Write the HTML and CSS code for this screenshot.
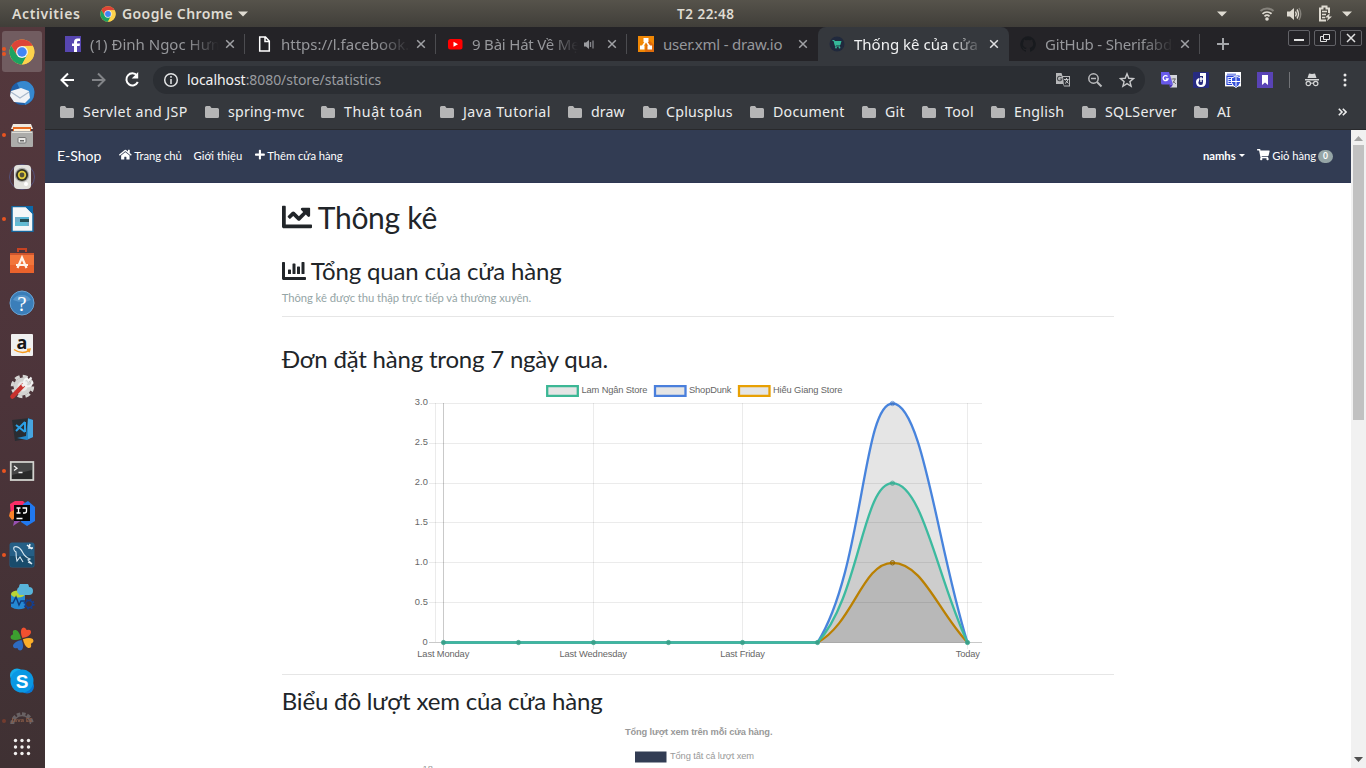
FILE: index.html
```html
<!DOCTYPE html>
<html lang="vi">
<head>
<meta charset="utf-8">
<title>Thống kê của cửa hàng</title>
<link rel="stylesheet" href="styles.css">
</head>
<body>
<svg class="defs" width="0" height="0">
  <defs>
    <symbol id="chrome" viewBox="0 0 48 48">
      <circle cx="24" cy="24" r="23" fill="#fbc943"/>
      <path d="M4 12.6A23 23 0 0 1 44 12.6L24 13 14.5 29.5z" fill="#dd4437"/>
      <path d="M4 12.6A23 23 0 0 0 24 47L33.5 29.5H14.4z" fill="#1da261"/>
      <path d="M24 13H44A23 23 0 0 1 24 47L33.5 29.5z" fill="#fdd24c"/>
      <circle cx="24" cy="24" r="11" fill="#f4f4f4"/><circle cx="24" cy="24" r="8.8" fill="#4285f4"/>
    </symbol>
    <symbol id="folder" viewBox="0 0 14 12"><path d="M1.5 0H5l1.5 2h6A1.5 1.5 0 0 1 14 3.500v7A1.500 1.500 0 0 1 12.500 12h-11A1.500 1.500 0 0 1 0 10.500v-9A1.500 1.500 0 0 1 1.500 0z" fill="#b5b5b6"/></symbol>
    <symbol id="close" viewBox="0 0 10 10"><path d="M1.200 1.200l7.600 7.600M8.800 1.200L1.200 8.800" fill="none" stroke="currentColor" stroke-width="1.500"/></symbol>
    <symbol id="caret" viewBox="0 0 10 6"><path d="M0 .5h10L5 5.500z" fill="currentColor"/></symbol>
  </defs>
</svg>

<header class="topbar">
  <span class="activities">Activities</span>
  <svg class="app-icon" width="16" height="16"><use href="#chrome"/></svg>
  <span class="app-name">Google Chrome</span>
  <svg class="app-caret" width="10" height="6"><use href="#caret"/></svg>
  <span class="clock">T2 22:48</span>
  <div class="tray">
    <svg width="10" height="6"><use href="#caret"/></svg>
    <svg class="wifi" width="16" height="15" viewBox="0 0 16 15" fill="none"><path d="M1.500 5a9.500 9.500 0 0 1 13 0" stroke="#85827b" stroke-width="2"/><path d="M3.500 7.800a6.500 6.500 0 0 1 9 0M5.500 10.300a3.700 3.700 0 0 1 5 0" stroke="#dfdbd2" stroke-width="1.700"/><circle cx="8" cy="13" r="1.800" fill="#dfdbd2"/></svg>
    <svg class="volume" width="16" height="14" viewBox="0 0 16 14" fill="none"><path d="M1 4.500h3l4-3.500v12L4 9.500H1z" fill="#dfdbd2"/><path d="M9.500 4.500q1.600 2.500 0 5M11 2.500q3 4.500 0 9" stroke="#dfdbd2" stroke-width="1.400"/><path d="M13 1q3.500 6 0 12" stroke="#85827b" stroke-width="1.400"/></svg>
    <svg class="battery" width="15" height="17" viewBox="0 0 15 17" fill="none"><path d="M11 8V3.500H8.500V1.500h-4v2H2v12h6" stroke="#dfdbd2" stroke-width="2"/><path d="M4 6.500h5M4 9.500h4M4 12.500h3" stroke="#dfdbd2" stroke-width="1.500"/><path d="M12 8l-5 4.500h3L9 16l5-4.500h-3z" fill="#dfdbd2"/></svg>
    <svg width="10" height="6"><use href="#caret"/></svg>
  </div>
</header>

<div class="desktop">
  <nav class="dock">
    <div class="dock-item active run run2"><svg width="26" height="26"><use href="#chrome"/></svg></div>
    <div class="dock-item"><svg viewBox="0 0 26 26"><circle cx="13.500" cy="13" r="12" fill="#1f5fa8"/><path d="M8 3Q20-3 25 9q2 12-9 16l-3-11z" fill="#3688cf"/><path d="M2 11l10-3 8 3 1 7-5 5-11-1-4-6z" fill="#f1f3f6"/><path d="M2 12l9 6 9-6" fill="none" stroke="#aab9cb" stroke-width="1.200"/></svg></div>
    <div class="dock-item run"><svg viewBox="0 0 26 26"><path d="M4 2h18l2 5H2z" fill="#eee9e0"/><path d="M4 5h18v5H4z" fill="#e86b21"/><path d="M5 7h16v2H5z" fill="#fff0d8"/><rect x="2" y="9" width="22" height="16" rx="1" fill="#acacaa"/><path d="M3 10h20v1H3z" fill="#deded9"/><rect x="9" y="15.500" width="8" height="5.500" rx="1" fill="#e8e8e6" stroke="#777"/><path d="M11 18h4v1.500h-4z" fill="#666"/></svg></div>
    <div class="dock-item"><svg viewBox="0 0 26 26"><circle cx="13" cy="13" r="12.500" fill="none" stroke="#54517a" stroke-width="1"/><rect x="5" y="1" width="17" height="24" rx="4" fill="#e2e2dd"/><circle cx="13" cy="11" r="7.200" fill="#aaa"/><circle cx="13" cy="11" r="6" fill="#323323"/><circle cx="13" cy="11" r="4.200" fill="#e2cc3b"/><circle cx="13" cy="11" r="2.400" fill="#55533a"/><circle cx="17" cy="20" r="2" fill="#fff"/></svg></div>
    <div class="dock-item run"><svg viewBox="0 0 26 26"><path d="M3 .5h14l7 7v18H3z" fill="#f5f7f8" stroke="#15659c" stroke-width="1.500"/><path d="M16 0h8v8z" fill="#0c69a9"/><path d="M6 11h14v9H6z" fill="#70aeca"/><path d="M11 11h9v5h-9z" fill="#264e55"/><path d="M11 11h9v2h-9z" fill="#58b5d5"/><path d="M6 16h12v4H6z" fill="#62bcd4"/></svg></div>
    <div class="dock-item"><svg viewBox="0 0 26 26"><path d="M9 4V1h8v3" fill="none" stroke="#c74323" stroke-width="2"/><path d="M1 5h24v20H1z" fill="#f2753b"/><path d="M1 17h24v8H1z" fill="#e9622c"/><path d="M1 5h24v2H1z" fill="#cf552e"/><path d="M8.500 20L13 9.500 17.500 20M7 17h12" fill="none" stroke="#fff4ea" stroke-width="2.200"/></svg></div>
    <div class="dock-item"><svg viewBox="0 0 26 26"><circle cx="13" cy="13" r="12" fill="#3b7eb9" stroke="#6aa3d3"/><path d="M4 10a10 9 0 0 1 18 0q-8 4-18 0z" fill="#5896cb"/><text x="13" y="20.500" text-anchor="middle" class="help-mark">?</text></svg></div>
    <div class="dock-item"><svg viewBox="0 0 26 26"><rect x="2" y="2" width="22" height="22" rx="1" fill="#f0f0f0"/><text x="13" y="16.500" text-anchor="middle" class="amazon-mark">a</text><path d="M5 17.500q8 5.500 15 1M18 17.500l3-.3-1 3" fill="none" stroke="#f49a20" stroke-width="1.500"/></svg></div>
    <div class="dock-item"><svg viewBox="0 0 26 26"><circle cx="13.500" cy="12.500" r="10.200" fill="none" stroke="#d5d5d3" stroke-width="3" stroke-dasharray="4.900 3.100"/><circle cx="13.500" cy="12.500" r="9" fill="#d3d3d1"/><circle cx="13.500" cy="12.500" r="5" fill="#e9e9e7"/><path d="M3.500 22.500L14 11.500" stroke="#c8322e" stroke-width="4.500" stroke-linecap="round"/><path d="M13 12l5-4" stroke="#eee" stroke-width="3"/><path d="M22.500 3.500l-3 3-1.500-2a4 4 0 1 0 5 3" fill="none" stroke="#f3f3f3" stroke-width="2"/></svg></div>
    <div class="dock-item"><svg viewBox="0 0 26 26"><path d="M3 4l18-2 2 20-17 3z" fill="#292d32"/><path d="M19 2l5 2v17l-6 3-10-2 9-2z" fill="#2489ca"/><path d="M19 3l5 1v17l-5 2z" fill="#47a5df"/><path d="M7 9l9 7M16 6L7 15M16 6v10" fill="none" stroke="#2ba0e6" stroke-width="2"/></svg></div>
    <div class="dock-item run"><svg viewBox="0 0 26 26"><rect x="1.800" y="4" width="22.500" height="18" fill="#292a2a" stroke="#d1d2ce" stroke-width="1.800"/><path d="M3 5h20v7L3 17z" fill="#454646"/><path d="M5 8l3 2.200-3 2.300M9.500 14.500h4" fill="none" stroke="#eee" stroke-width="1.300"/></svg></div>
    <div class="dock-item"><svg viewBox="0 0 26 26"><path d="M1 4l5-3h8l5 5-7 9-10 2z" fill="#f92d67"/><path d="M1 12l6-3 2 7-6 4-3-4z" fill="#f9822a"/><path d="M14 4l5-3 7 6v14l-8 5-6-4z" fill="#2179ef"/><path d="M7 13l6 7-9 6z" fill="#9850b2"/><path d="M5 5h16v16H5z" fill="#070708"/><path d="M7.500 8h4M7.500 13h4M9.500 8v5M13.500 8h4v3q0 2-2 2H14M7.500 18.500h6" fill="none" stroke="#fff" stroke-width="1.300"/></svg></div>
    <div class="dock-item run"><svg viewBox="0 0 26 26"><rect x=".5" y=".5" width="25" height="25" rx="2.500" fill="#255f86"/><path d="M1 14h24v9q0 2-2 2H3q-2 0-2-2z" fill="#194c6c"/><path d="M5 5q5-2 9 6 2 4 7 6l-2 1 4 4-4-2M5 5q-1 3 2 5 0 5 1 9l3-4 3 5" fill="none" stroke="#d9e8f1" stroke-width="1.100"/><path d="M18 3l5 4M21 2l-1 4 4 0" stroke="#eef5fa" stroke-width="1.500" fill="none"/></svg></div>
    <div class="dock-item"><svg viewBox="0 0 26 26"><path d="M2 10v13q6 4 14 1V10z" fill="#2589d4"/><ellipse cx="9" cy="10" rx="7" ry="3.500" fill="#bad435"/><path d="M10 10a4 4 0 0 1 0-7 5 5 0 0 1 10 0 4 4 0 0 1 4 4q0 4-4 4h-10z" fill="#58b4da"/><path d="M1 19h3l3-6 3 8 2-4h4" fill="none" stroke="#113c7a" stroke-width="1.400"/><circle cx="20" cy="20" r="3.500" fill="none" stroke="#123f92" stroke-width="1.500"/><circle cx="20" cy="20" r="4.800" fill="none" stroke="#123f92" stroke-width="1.500" stroke-dasharray="1.800 1.970"/></svg></div>
    <div class="dock-item"><svg viewBox="0 0 26 26"><g transform="rotate(-18 13 13)"><path d="M13 12Q8 7 9 3q2-3 5 0 4-3 5 1 0 4-6 8z" fill="#f2502f" transform="rotate(40 13 13)"/><path d="M12 13Q7 18 3 17q-3-2 0-5-3-4 1-5 4 0 8 6z" fill="#3ca02f" transform="rotate(40 13 13)"/><path d="M13 14q5 5 4 9-2 3-5 0-4 3-5-1 0-4 6-8z" fill="#2e6bc0" transform="rotate(40 13 13)"/><path d="M14 13q5-5 9-4 3 2 0 5 3 4-1 5-4 0-8-6z" fill="#fbae29" transform="rotate(40 13 13)"/></g></svg></div>
    <div class="dock-item"><svg viewBox="0 0 26 26"><circle cx="8" cy="7.500" r="7" fill="#14acec"/><circle cx="18" cy="18.500" r="7" fill="#0878d4"/><circle cx="13" cy="13" r="11.500" fill="#0998e4"/><text x="13" y="19.500" text-anchor="middle" class="skype-mark">S</text></svg></div>
    <div class="dock-item partial run"><svg width="26" height="16" viewBox="0 0 26 16"><path d="M3 15a10 10 0 0 1 20 0" fill="none" stroke="#777375" stroke-width="3.500" stroke-dasharray="3.500 1.700"/><path d="M4.500 15a8.500 8.500 0 0 1 17 0" fill="none" stroke="#777375" stroke-width="1.500"/><text x="13" y="12.500" text-anchor="middle" class="java-mark">Java EE</text></svg></div>
    <div class="dock-grid"><svg width="18" height="18" viewBox="0 0 18 18" fill="#f2f1f0"><circle cx="2.500" cy="2.500" r="1.700"/><circle cx="9" cy="2.500" r="1.700"/><circle cx="15.500" cy="2.500" r="1.700"/><circle cx="2.500" cy="9" r="1.700"/><circle cx="9" cy="9" r="1.700"/><circle cx="15.500" cy="9" r="1.700"/><circle cx="2.500" cy="15.500" r="1.700"/><circle cx="9" cy="15.500" r="1.700"/><circle cx="15.500" cy="15.500" r="1.700"/></svg></div>
  </nav>

  <main class="browser">
    <div class="tabs">
      <div class="tab"><svg width="16" height="16" viewBox="0 0 16 16"><path d="M0 0h16v16H0z" fill="#5746b0"/><path d="M9 16v-6H7V7.500h2V6q0-3.500 3.500-3.500H15V5h-1.700Q12 5 12 6.300v1.200h3l-.4 2.500H12v6z" fill="#fff"/></svg><span class="title t1">(1) Đinh Ngọc Hưng</span><svg class="x" width="10" height="10"><use href="#close"/></svg></div>
      <div class="tab"><svg width="16" height="16" viewBox="0 0 16 16"><path d="M3.700 1h5.800l3.800 4v10H3.700zM9 1v4.500h4" fill="none" stroke="#fff" stroke-width="1.500"/></svg><span class="title t2">https://l.facebook.c</span><svg class="x" width="10" height="10"><use href="#close"/></svg></div>
      <div class="tab"><svg width="16" height="16" viewBox="0 0 16 16"><rect x="1" y="3" width="14.500" height="10.500" rx="2.500" fill="#f00"/><path d="M6.500 5.800v5L11 8.300z" fill="#fff"/></svg><span class="title t3">9 Bài Hát Về Mẹ</span><svg class="audio" width="11" height="11" viewBox="0 0 11 11"><path d="M0 3.500h2L5 1v9L2 7.500H0z" fill="#9b9ca0"/><path d="M6.500 3v5M9 1.500v8" stroke="#85868b" stroke-width="1.300"/></svg><svg class="x" width="10" height="10"><use href="#close"/></svg></div>
      <div class="tab"><svg width="16" height="16" viewBox="0 0 16 16"><path d="M0 0h16v16H0z" fill="#f08705"/><path d="M9 2l7 7v7H7z" fill="#df6c0c"/><path d="M8 5l-4 6M8 5l4 6" stroke="#fff" stroke-width="1.600"/><path d="M5.500 2h5v4h-5zM2 9.500h4.500v4H2zM9.500 9.500H14v4H9.500z" fill="#fff"/></svg><span class="title t4">user.xml - draw.io</span><svg class="x" width="10" height="10"><use href="#close"/></svg></div>
      <div class="tab current"><svg width="16" height="16" viewBox="0 0 16 16"><circle cx="8" cy="8" r="7.500" fill="#20293d"/><path d="M3.500 4.500h1.500l1.500 5.500H11" fill="none" stroke="#35b99a" stroke-width="1.100"/><path d="M5 5h7.500l-1.200 4H6z" fill="#35b99a"/><circle cx="7" cy="11.500" r=".9" fill="#35b99a"/><circle cx="10.500" cy="11.500" r=".9" fill="#35b99a"/></svg><span class="title t5">Thống kê của cửa h</span><svg class="x" width="10" height="10"><use href="#close"/></svg></div>
      <div class="tab"><svg width="16" height="16" viewBox="0 0 16 16"><path d="M8 .3a8 8 0 0 0-2.500 15.500c.4.100.500-.2.500-.4v-1.500c-2.200.5-2.700-1-2.700-1-.3-.8-.8-1.100-.8-1.100-.8-.5 0-.5 0-.5.800 0 1.200.8 1.200.8.800 1.200 1.900.9 2.400.7 0-.6.300-.9.500-1.100-1.800-.2-3.600-.9-3.600-4 0-.9.300-1.600.8-2.100 0-.2-.3-1 .1-2.100 0 0 .700-.2 2.200.8a7.500 7.500 0 0 1 4 0c1.500-1 2.200-.8 2.200-.8.400 1.100.1 1.900.1 2.100.5.500.8 1.200.8 2.100 0 3.100-1.900 3.800-3.600 4 .3.300.5.800.5 1.500v2.200c0 .2.100.5.500.4A8 8 0 0 0 8 .3z" fill="#181a1e"/></svg><span class="title t6">GitHub - Sherifabde</span><svg class="x" width="10" height="10"><use href="#close"/></svg></div>
      <svg class="new-tab" width="12" height="12" viewBox="0 0 12 12"><path d="M6 0v12M0 6h12" stroke="#a4a6aa" stroke-width="2"/></svg>
      <div class="window-buttons">
        <svg width="22" height="16" viewBox="0 0 22 16"><rect x=".5" y=".5" width="21" height="15" rx="1.500"/><path class="glyph" d="M6 10h10" stroke-width="2"/></svg>
        <svg width="22" height="16" viewBox="0 0 22 16"><rect x=".5" y=".5" width="21" height="15" rx="1.500"/><path class="glyph" d="M9.500 4.500h6v5h-6zM12.500 9.500v2h-6v-5h3"/></svg>
        <svg width="22" height="16" viewBox="0 0 22 16"><rect x=".5" y=".5" width="21" height="15" rx="1.500"/><path class="glyph" d="M7 4l8 8M15 4l-8 8" stroke-width="1.500"/></svg>
      </div>
    </div>

    <div class="toolbar">
      <svg class="nav-icons" width="80" height="16" viewBox="0 0 80 16" fill="none" stroke-width="2"><path d="M14 8H1.500M8 1.500L1.500 8 8 14.500" stroke="#fff"/><path d="M32 8h12.500M38 1.500L44.500 8 38 14.500" stroke="#828488"/><path d="M77 3.500A6 6 0 1 0 77.800 10" stroke="#fff"/><path d="M78.200 0v6.500h-6.500z" fill="#fff"/></svg>
      <div class="omnibox">
        <svg width="16" height="16" viewBox="0 0 16 16" fill="none" stroke="#e4e5e6" stroke-width="1.500"><circle cx="8" cy="8" r="6.300"/><path d="M8 7v5M8 4v1.700"/></svg>
        <span class="url"><b>localhost</b>:8080/store/statistics</span>
        <div class="omni-actions">
          <svg width="16" height="16" viewBox="0 0 16 16"><path d="M1 1h5.500l1 3H15v10.500H9L8 12H1z" fill="#b7b8ba"/><path d="M8 5h6v8.500H9z" fill="#303338"/><path d="M6.500 5A2.300 2.300 0 1 0 7 7H4.800" fill="none" stroke="#44474b" stroke-width="1.100"/><path d="M9 7.500h4.500M11.500 6v1.500M13 7.500q-1 3-3 4M10.500 8.500l3 3" fill="none" stroke="#c5c6c8"/></svg>
          <svg width="16" height="16" viewBox="0 0 16 16" fill="none" stroke="#babbbd" stroke-width="1.500"><circle cx="6.500" cy="6.500" r="4.700"/><path d="M10 10l4.500 4.500" stroke-width="2"/><path d="M4 6.500h5"/></svg>
          <svg width="16" height="16" viewBox="0 0 16 16"><path d="M8 1.800l1.800 4.500 4.800.3-3.700 3 1.200 4.700L8 11.700l-4.100 2.600 1.200-4.700-3.700-3 4.800-.3z" fill="none" stroke="#c7c8ca" stroke-width="1.400"/></svg>
        </div>
      </div>
      <div class="extensions">
        <svg width="16" height="16" viewBox="0 0 16 16"><path d="M8 3h8v12.500H9z" fill="#d4d5dc"/><path d="M0 0h8l4 12.500H1.500Q0 12.500 0 11z" fill="#6859ea"/><path d="M8 12.500h4L9.500 16z" fill="#4a32ba"/><path d="M6.500 4.500A2.500 2.500 0 1 0 7 7H4.800" fill="none" stroke="#fff" stroke-width="1.300"/><path d="M10.500 7H15M13 6v1M14 7q-1 3-2 4M12 9l3 3" fill="none" stroke="#777"/></svg>
        <svg width="16" height="16" viewBox="0 0 16 16"><rect width="16" height="16" rx="1" fill="#272b80"/><path d="M7 1h6v9q0 5-5 5-5 0-5-5 0-3 3-4v3q-1 1-.5 2.500Q6 13 8 13q2 0 2-2.500V4H7z" fill="#fff"/><path d="M8 5v5M6.500 7H10" stroke="#fff" stroke-width="1.300"/></svg>
        <svg width="16" height="16" viewBox="0 0 16 16"><rect x=".7" y=".7" width="14.600" height="13" fill="#2642d6" stroke="#fff" stroke-width="1.400"/><path d="M1 1h14v2.500H1z" fill="#fff"/><path d="M2 2.200h9" stroke="#2642d6" stroke-width=".8"/><path d="M2.500 5h10v7h-10z" fill="#dfe4ff"/><path d="M3.500 6.500h3M3.500 8.500h3M3.500 10.500h3" stroke="#2642d6"/><path d="M11 4l4.500 2v4.500q-1 3.500-4.500 5-3.500-1.500-4.500-5V6z" fill="#3450da" stroke="#fff"/><path d="M11 5v9M7 9.500h8" stroke="#fff"/></svg>
        <svg width="16" height="16" viewBox="0 0 16 16"><path d="M0 0h16v16H0z" fill="#5943b6"/><path d="M5 3h6v10l-3-2.500L5 13z" fill="#fff"/></svg>
        <i></i>
        <svg class="incognito" width="14" height="15" viewBox="0 0 14 15"><path d="M4 1.500l3 .5 3-.5L11.500 6h-9zM0 7h14v1.500H0z" fill="#d4d5d6"/><path d="M5.500 11.500q1.500-1 3 0" stroke="#d4d5d6" fill="none"/><circle cx="3.300" cy="11.500" r="2.200" fill="none" stroke="#d4d5d6" stroke-width="1.200"/><circle cx="10.700" cy="11.500" r="2.200" fill="none" stroke="#d4d5d6" stroke-width="1.200"/></svg>
        <svg class="menu" width="4" height="14" viewBox="0 0 4 14" fill="#e8e8e9"><circle cx="2" cy="2" r="1.500"/><circle cx="2" cy="7" r="1.500"/><circle cx="2" cy="12" r="1.500"/></svg>
      </div>
    </div>

    <div class="bookmarks">
      <div><svg width="14" height="12"><use href="#folder"/></svg><span>Servlet and JSP</span></div>
      <div><svg width="14" height="12"><use href="#folder"/></svg><span>spring-mvc</span></div>
      <div><svg width="14" height="12"><use href="#folder"/></svg><span>Thuật toán</span></div>
      <div><svg width="14" height="12"><use href="#folder"/></svg><span>Java Tutorial</span></div>
      <div><svg width="14" height="12"><use href="#folder"/></svg><span>draw</span></div>
      <div><svg width="14" height="12"><use href="#folder"/></svg><span>Cplusplus</span></div>
      <div><svg width="14" height="12"><use href="#folder"/></svg><span>Document</span></div>
      <div><svg width="14" height="12"><use href="#folder"/></svg><span>Git</span></div>
      <div><svg width="14" height="12"><use href="#folder"/></svg><span>Tool</span></div>
      <div><svg width="14" height="12"><use href="#folder"/></svg><span>English</span></div>
      <div><svg width="14" height="12"><use href="#folder"/></svg><span>SQLServer</span></div>
      <div><svg width="14" height="12"><use href="#folder"/></svg><span>AI</span></div>
      <svg class="more" width="9" height="8" viewBox="0 0 9 8" fill="none" stroke="#eceded" stroke-width="1.600"><path d="M.8.800L4 4 .8 7.200M4.800.8L8 4 4.800 7.200"/></svg>
    </div>

    <div class="viewport">
      <div class="page">
        <nav class="navbar">
          <a class="brand">E-Shop</a>
          <a class="n1"><svg width="12.700" height="11.250" viewBox="0 0 576 512"><path d="M280.370 148.260L96 300.110V464a16 16 0 0 0 16 16l112.060-.29a16 16 0 0 0 15.920-16V368a16 16 0 0 1 16-16h64a16 16 0 0 1 16 16v95.640a16 16 0 0 0 16 16.050L464 480a16 16 0 0 0 16-16V300L295.670 148.260a12.190 12.190 0 0 0-15.300 0zM571.600 251.470L488 182.560V44.050a12 12 0 0 0-12-12h-56a12 12 0 0 0-12 12v72.610L318.470 43a48 48 0 0 0-61 0L4.340 251.470a12 12 0 0 0-1.600 16.900l25.500 31A12 12 0 0 0 45.150 301l235.220-193.740a12.190 12.190 0 0 1 15.300 0L530.900 301a12 12 0 0 0 16.900-1.600l25.500-31a12 12 0 0 0-1.700-16.930z"/></svg><span>Trang chủ</span></a>
          <a class="n2"><span>Giới thiệu</span></a>
          <a class="n3"><svg width="9.850" height="11.250" viewBox="0 0 448 512"><path d="M416 208H272V64c0-17.670-14.330-32-32-32h-32c-17.670 0-32 14.330-32 32v144H32c-17.670 0-32 14.330-32 32v32c0 17.670 14.330 32 32 32h144v144c0 17.670 14.330 32 32 32h32c17.670 0 32-14.330 32-32V304h144c17.670 0 32-14.330 32-32v-32c0-17.670-14.330-32-32-32z"/></svg><span>Thêm cửa hàng</span></a>
          <div class="account">
            <a class="user">namhs<i></i></a>
            <a class="cart"><svg width="12.700" height="11.250" viewBox="0 0 576 512"><path d="M528.120 301.319l47.273-208C578.806 78.301 567.391 64 551.990 64H159.208l-9.166-44.810C147.758 8.021 137.930 0 126.529 0H24C10.745 0 0 10.745 0 24v16c0 13.255 10.745 24 24 24h69.883l70.248 343.435C147.325 417.100 136 435.222 136 456c0 30.928 25.072 56 56 56s56-25.072 56-56c0-15.674-6.447-29.835-16.824-40h209.647C430.447 426.165 424 440.326 424 456c0 30.928 25.072 56 56 56s56-25.072 56-56c0-22.172-12.888-41.332-31.579-50.405l5.517-24.276c3.413-15.018-8.002-29.319-23.403-29.319H218.117l-6.545-32h293.145c11.206 0 20.920-7.754 23.403-18.681z"/></svg><span>Giỏ hàng</span><b>0</b></a>
          </div>
        </nav>

        <div class="container">
          <h1><svg width="30" height="30" viewBox="0 0 512 512"><path d="M496 384H64V80c0-8.840-7.160-16-16-16H16C7.160 64 0 71.160 0 80v336c0 17.670 14.330 32 32 32h464c8.840 0 16-7.160 16-16v-32c0-8.840-7.160-16-16-16zM464 96H345.940c-21.380 0-32.090 25.850-16.970 40.970l32.400 32.400L288 242.750l-73.370-73.370c-12.500-12.500-32.760-12.500-45.250 0l-68.690 68.690c-6.250 6.250-6.250 16.380 0 22.630l22.620 22.620c6.250 6.250 16.380 6.250 22.630 0L192 237.250l73.370 73.370c12.500 12.500 32.760 12.500 45.250 0l96-96 32.400 32.400c15.120 15.120 40.970 4.410 40.970-16.970V112c.01-8.840-7.150-16-15.990-16z"/></svg><span>Thông kê</span></h1>
          <h2 class="overview"><svg width="24" height="24" viewBox="0 0 512 512"><path d="M332.800 320h38.400c6.400 0 12.800-6.400 12.800-12.800V172.800c0-6.400-6.400-12.800-12.800-12.800h-38.400c-6.400 0-12.800 6.400-12.800 12.800v134.400c0 6.400 6.400 12.800 12.800 12.800zm96 0h38.400c6.400 0 12.800-6.400 12.800-12.800V76.800c0-6.400-6.400-12.800-12.800-12.800h-38.400c-6.400 0-12.800 6.400-12.800 12.800v230.400c0 6.400 6.400 12.800 12.800 12.800zm-288 0h38.400c6.400 0 12.800-6.400 12.800-12.800v-70.400c0-6.400-6.400-12.800-12.800-12.800h-38.400c-6.400 0-12.800 6.400-12.800 12.800v70.400c0 6.400 6.400 12.800 12.800 12.800zm96 0h38.400c6.400 0 12.800-6.400 12.800-12.800V108.800c0-6.400-6.400-12.800-12.800-12.800h-38.400c-6.400 0-12.800 6.400-12.800 12.800v198.400c0 6.400 6.400 12.800 12.800 12.800zM496 384H64V80c0-8.840-7.160-16-16-16H16C7.160 64 0 71.160 0 80v336c0 17.670 14.330 32 32 32h464c8.840 0 16-7.160 16-16v-32c0-8.840-7.160-16-16-16z"/></svg><span>Tổng quan của cửa hàng</span></h2>
          <p class="muted">Thông kê được thu thập trực tiếp và thường xuyên.</p>
          <h2 class="orders">Đơn đặt hàng trong 7 ngày qua.</h2>
          <svg class="line-chart" width="600" height="290" viewBox="400 380 600 290">
            <g stroke="#000" stroke-opacity=".1" fill="none">
              <path d="M429 403.500H982M429 443.500H982M429 483.500H982M429 522.500H982M429 562.500H982M429 602.500H982M435.500 403V642M593.500 403V649M742.500 403V649M967.500 403V649" stroke-opacity=".08"/>
              <path d="M429 642.500H982M443.500 403V650" stroke-opacity=".21"/>
            </g>
            <g stroke-width="2.300" stroke-linejoin="round" fill="rgba(0,0,0,.1)">
              <path stroke="#e8a003" d="M443.500 642.500H817.500C853.100 623.600 862.500 562.800 892.500 562.800S937.500 610.600 967.500 642.500"/>
              <circle cx="892.500" cy="562.800" r="2.200" stroke="#b98209" stroke-width="1"/>
              <path stroke="#3e7ddb" stroke-opacity=".95" d="M443.500 642.500H817.500C863.700 568.900 862.500 403.500 892.500 403.500S937.500 546.900 967.500 642.500"/>
              <circle cx="892.500" cy="403.500" r="2.200" stroke="#3e7ddb" stroke-width="1" stroke-opacity=".6"/>
              <path stroke="#3cba9f" d="M443.500 642.500H817.500C859.600 597.800 862.500 483.200 892.500 483.200S937.500 578.800 967.500 642.500"/>
            </g>
            <g fill="#3a9f8a" stroke="#3aa890" stroke-opacity=".6"><circle cx="443.500" cy="642.500" r="2.200"/><circle cx="518.500" cy="642.500" r="2.200"/><circle cx="593.500" cy="642.500" r="2.200"/><circle cx="668.500" cy="642.500" r="2.200"/><circle cx="742.500" cy="642.500" r="2.200"/><circle cx="817.500" cy="642.500" r="2.200"/><circle cx="892.500" cy="483.200" r="2.200" fill-opacity=".4"/><circle cx="967.500" cy="642.500" r="2.200"/></g>
            <g fill="#e5e5e5" stroke-width="2.300"><path stroke="#3cb795" d="M547.200 386.200h30.600v9.600h-30.600z"/><path stroke="#4a7fdc" d="M655 386.200h30.500v9.600H655z"/><path stroke="#e8a003" d="M739 386.200h30.500v9.600H739z"/></g>
            <g class="chart-text">
              <text x="581.500" y="393" textLength="66">Lam Ngân Store</text><text x="689" y="393" textLength="42.500">ShopDunk</text><text x="773" y="393" textLength="69.500">Hiếu Giang Store</text>
              <text x="414.800" y="405.300" textLength="13">3.0</text><text x="414.800" y="445.300" textLength="13">2.5</text><text x="414.800" y="485.300" textLength="13">2.0</text><text x="414.800" y="525.300" textLength="13">1.5</text><text x="414.800" y="565" textLength="13">1.0</text><text x="414.800" y="605" textLength="13">0.5</text><text x="422.500" y="645.300">0</text>
              <text x="417.300" y="657" textLength="52">Last Monday</text><text x="559.500" y="657" textLength="67.500">Last Wednesday</text><text x="720.300" y="657" textLength="44.500">Last Friday</text><text x="955.800" y="657" textLength="24">Today</text>
            </g>
          </svg>
          <hr>
          <h2 class="views">Biểu đô lượt xem của cửa hàng</h2>
          <svg class="bar-chart" width="600" height="50" viewBox="400 718 600 50">
            <rect x="635" y="751.500" width="31.500" height="11" fill="#323c53"/>
            <g class="chart-text faded"><text x="625" y="735" textLength="147.500" font-weight="bold">Tổng lượt xem trên mỗi cửa hàng.</text><text x="670" y="759" textLength="84">Tổng tất cả lượt xem</text><text x="422.500" y="771.500">18</text></g>
          </svg>
        </div>
      </div>
      <div class="scrollbar"><svg width="9" height="5" viewBox="0 0 9 5"><path d="M0 5l4.500-5L9 5z" fill="#a3a3a3"/></svg><div></div><svg class="down" width="9" height="5" viewBox="0 0 9 5"><path d="M0 0l4.500 5L9 0z" fill="#505050"/></svg></div>
    </div>
  </main>
</div>
</body>
</html>
```
FILE: styles.css
```css
* { box-sizing: border-box; }
body { margin: 0; width: 1366px; height: 768px; overflow: hidden; font-family: "Noto Sans", sans-serif; background: #fff; }
svg { display: block; flex: none; }
.defs { position: absolute; }

.topbar { height: 27px; display: flex; align-items: center; background: linear-gradient(#56534b, #403e39); color: #dfdbd2; font-size: 14px; font-weight: 600; }
.activities { width: 88px; padding-left: 12px; letter-spacing: .6px; }
.app-icon { margin-left: 12px; }
.app-name { margin-left: 6px; width: 111px; white-space: nowrap; letter-spacing: .4px; }
.app-caret { margin-left: 5px; }
.clock { margin-left: 429px; font-size: 13.5px; letter-spacing: .5px; }
.tray { display: flex; align-items: center; margin-left: auto; margin-right: 14px; }
.wifi { margin-left: 32px; }
.volume { margin-left: 11px; }
.battery { margin-left: 16px; }
.battery + svg { margin-left: 9px; }

.desktop { display: flex; height: 741px; }
.dock { width: 45px; background: linear-gradient(#54383d, #4c343a 50%, #3f3133); padding: 4px 0 0; overflow: hidden; }
.dock-item { height: 42px; width: 40px; margin: 0 0 0 2px; display: flex; align-items: center; justify-content: center; position: relative; }
.dock-item svg { width: 26px; height: 26px; }
.dock-item.active { height: 41px; background: #715c60; border-radius: 3px; }
.dock-item.run::before { content: ""; position: absolute; left: 0; top: 19px; width: 4px; height: 4px; border-radius: 50%; background: #e95420; }
.dock-item.run2::before { top: 16px; box-shadow: 0 5px #e95420; }
.dock-item.partial { height: 26px; align-items: flex-start; padding-top: 7px; opacity: .75; }
.dock-item.partial svg { height: 16px; }
.dock-item.partial::before { opacity: .4; top: 17px; }
.dock-grid { display: flex; justify-content: center; margin-top: 10px; padding-right: 1px; }
.help-mark { font: 21px "Liberation Serif", serif; fill: #fff; }
.amazon-mark { font: bold 18px "Noto Sans", sans-serif; fill: #171717; }
.skype-mark { font: bold 19px "Liberation Sans", sans-serif; fill: #fff; }
.java-mark { font: bold 6px "Noto Sans", sans-serif; fill: #a36b4e; }

.browser { width: 1321px; background: #35383d; }
.tabs { height: 34px; background: #242327; display: flex; padding-left: 9px; }
.tab { width: 191px; display: flex; align-items: center; padding-left: 11px; position: relative; color: #96979b; }
.tab:not(.current)::after { content: ""; position: absolute; right: 0; top: 7px; width: 1px; height: 20px; background: #4c4c50; }
.tab:nth-child(4)::after { display: none; }
.tab.current { background: #35383d; color: #f1f2f3; border-radius: 8px 8px 0 0; }
.title { margin-left: 9px; width: 129px; height: 24px; line-height: 24px; font-size: 15px; letter-spacing: -.2px; white-space: nowrap; overflow: hidden; -webkit-mask-image: linear-gradient(90deg, #000 75%, transparent); mask-image: linear-gradient(90deg, #000 75%, transparent); }
.t1 { letter-spacing: 0; }
.t2 { letter-spacing: 0; }
.t3 { width: 106px; }
.t4 { -webkit-mask: none; mask: none; }
.t5 { letter-spacing: 0; }
.audio { margin-left: 6px; margin-right: 5px; }
.x { margin-left: 6px; color: #a0a1a5; }
.audio + .x { margin-left: 7px; }
.current .x { color: #e0e0e2; }
.new-tab { margin: 11px 0 0 17px; }
.window-buttons { margin: 3px 4px 0 auto; display: flex; gap: 4px; }
.window-buttons svg { fill: none; }
.window-buttons rect { stroke: #626267; }
.window-buttons .glyph { stroke: #e2e2e2; }

.toolbar { height: 37px; display: flex; align-items: center; }
.nav-icons { margin-left: 15px; }
.omnibox { margin-left: 13px; width: 992px; height: 28px; border-radius: 14px; background: #2b2e33; display: flex; align-items: center; padding-left: 10px; color: #9a9ca0; font-size: 14px; }
.url { margin-left: 8px; letter-spacing: -.06px; }
.url b { font-weight: 400; color: #f2f2f2; }
.omni-actions { margin-left: auto; margin-right: 10px; display: flex; gap: 16px; }
.extensions { display: flex; align-items: center; margin-left: 16px; }
.extensions svg { margin-right: 16px; }
.extensions i { width: 1px; height: 16px; background: #717377; margin-right: 15px; }
.extensions .incognito { margin-right: 24px; }
.extensions .menu { margin-right: 0; }

.bookmarks { height: 32px; display: flex; align-items: center; padding: 0 0 4px 15px; font-size: 14.2px; color: #eceded; border-bottom: 1px solid #28292c; }
.bookmarks div { display: flex; align-items: center; width: 145px; white-space: nowrap; letter-spacing: .4px; }
.bookmarks div:nth-child(2) { width: 116px; letter-spacing: .2px; }
.bookmarks div:nth-child(3) { width: 119px; letter-spacing: .6px; }
.bookmarks div:nth-child(4) { width: 128px; letter-spacing: .5px; }
.bookmarks div:nth-child(5) { width: 75px; letter-spacing: .1px; }
.bookmarks div:nth-child(6) { width: 107px; letter-spacing: .22px; }
.bookmarks div:nth-child(7) { width: 112px; letter-spacing: .25px; }
.bookmarks div:nth-child(8) { width: 60px; letter-spacing: .2px; }
.bookmarks div:nth-child(9) { width: 69px; letter-spacing: .3px; }
.bookmarks div:nth-child(10) { width: 91px; letter-spacing: .3px; }
.bookmarks div:nth-child(11) { width: 112px; letter-spacing: .33px; }
.bookmarks div:nth-child(12) { width: 60px; letter-spacing: 0; }
.bookmarks span { margin-left: 9px; }
.more { margin-left: auto; margin-right: 19px; }

.viewport { display: flex; height: 638px; }
.page { width: 1306px; background: #fff; overflow: hidden; font-family: Lato, sans-serif; color: #212529; }
.navbar { height: 53px; background: #323c53; border-bottom: 1px solid #2e3753; display: flex; align-items: center; padding: 0 18px 2px 12px; color: #fff; font-size: 11.25px; letter-spacing: -.05px; }
.navbar a { display: flex; align-items: center; white-space: nowrap; }
.navbar svg { fill: #fff; margin-right: 2.500px; }
.navbar .brand { font-size: 14.06px; width: 62px; padding-top: 1px; }
.navbar .n1 { width: 74.500px; }
.navbar .n2 { width: 61.500px; letter-spacing: .03px; }
.account { margin-left: auto; display: flex; gap: 12.500px; }
.user { font-weight: 700; }
.user i { border: 3px solid transparent; border-top-color: #fff; border-bottom: 0; margin-left: 3px; }
.cart b { background: #95a5a6; border-radius: 8px; width: 15px; height: 13px; line-height: 13px; font-size: 8.500px; text-align: center; margin-left: 2px; margin-top: 2px; }

.container { width: 855px; margin: 0 auto; padding: 0 11.250px; }
h1, h2 { margin: 0; font-weight: 400; white-space: nowrap; }
h1 svg, h2 svg { fill: #212529; margin-right: 6px; }
h1 { font-size: 30px; line-height: 36px; margin-top: 16px; display: flex; align-items: center; letter-spacing: -.28px; }
h2 { font-size: 24px; line-height: 29px; }
.overview { display: flex; align-items: center; margin-top: 21px; letter-spacing: -.15px; }
.overview svg { margin-right: 5px; }
.muted { margin: 4px 0 0; font-size: 11.250px; line-height: 17px; color: #95a5a6; height: 28px; border-bottom: 1px solid #e6e6e6; white-space: nowrap; letter-spacing: -.06px; }
.orders { margin-top: 27px; letter-spacing: -.2px; }
.line-chart { margin: 7px 0 0 118px; }
hr { border: 0; border-top: 1px solid #e6e6e6; margin: 4px 0 0; }
.views { margin-top: 11px; letter-spacing: -.17px; }
.bar-chart { margin: 3px 0 0 118px; }
.chart-text { font: 9.300px "Liberation Sans", Arial, sans-serif; fill: #666; }
.faded { fill: #999; }

.scrollbar { width: 15px; background: #f1f1f1; display: flex; flex-direction: column; align-items: center; padding: 6px 0; }
.scrollbar div { width: 11px; height: 275px; background: #c1c1c1; margin-top: 4px; }
.scrollbar .down { margin-top: auto; }
```
